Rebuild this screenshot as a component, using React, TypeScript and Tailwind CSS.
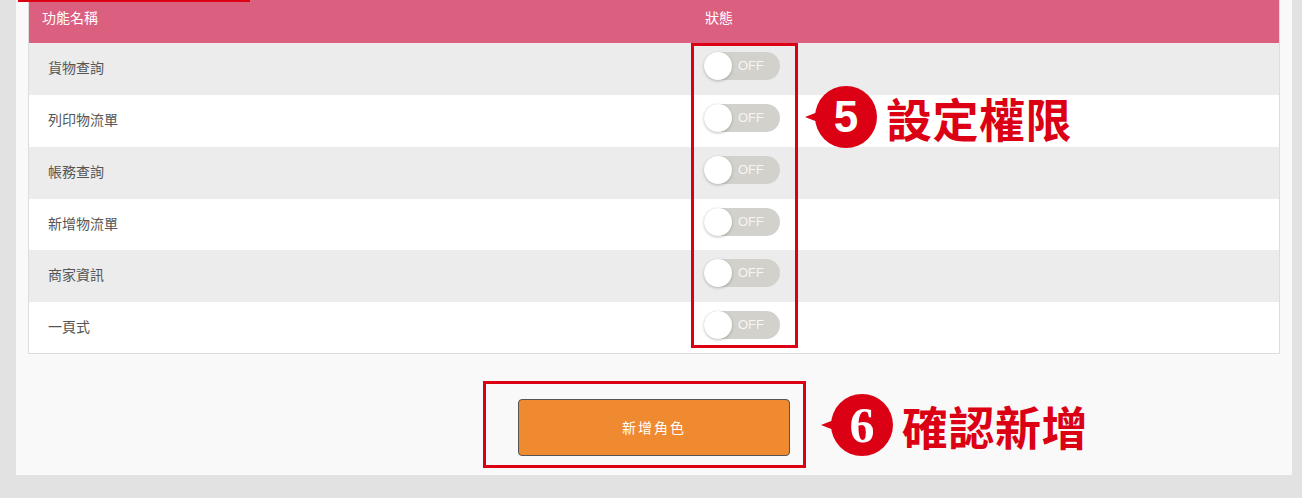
const rows = [
  { name: "貨物查詢", h: "h-[52px]" },
  { name: "列印物流單", h: "h-[52px]" },
  { name: "帳務查詢", h: "h-[52px]" },
  { name: "新增物流單", h: "h-[51px]" },
  { name: "商家資訊", h: "h-[52px]" },
  { name: "一頁式", h: "h-[51px]" },
];

function Toggle() {
  return (
    <div className="relative h-[28px] w-[76px] rounded-full bg-[#d3d1cb]">
      <div className="absolute left-0 top-0 h-[28px] w-[28px] rounded-full bg-white shadow-[0_1px_3px_rgba(0,0,0,0.25)]" />
      <span className="absolute left-[34px] top-[5px] font-['Liberation_Sans',sans-serif] text-[13px] leading-[18px] text-[#f7f6f2]">
        OFF
      </span>
    </div>
  );
}

function Callout({ num, label, serif }: { num: string; label: string; serif?: boolean }) {
  return (
    <div className="flex items-center">
      <div className="relative flex h-[62px] w-[62px] items-center justify-center rounded-full bg-[#dc0014]">
        <div className="absolute left-[-10px] top-[24px] h-0 w-0 border-y-[7px] border-r-[18px] border-y-transparent border-r-[#dc0014]" />
        <span
          className={
            serif
              ? "font-['Liberation_Serif',serif] text-[50px] font-bold leading-none text-white"
              : "font-['Liberation_Sans',sans-serif] text-[44px] font-bold leading-none text-white"
          }
        >
          {num}
        </span>
      </div>
      <span className="ml-[9px] font-['Noto_Sans_CJK_TC',sans-serif] text-[46px] font-bold leading-none tracking-[0.5px] text-[#dc0014]">
        {label}
      </span>
    </div>
  );
}

export default function App() {
  return (
    <div className="h-[498px] w-[1302px] overflow-hidden bg-[#e2e2e2] font-['Noto_Sans_CJK_TC',sans-serif]">
      <div className="relative ml-[16px] h-[475px] w-[1276px] bg-[#f9f9f9] px-[12px]">
        <div className="absolute left-[2px] top-0 h-[2px] w-[232px] bg-[#dc0014]" />

        <div className="border border-t-0 border-[#dddddd]">
          <div className="flex h-[43px] items-center bg-[#db5f7e] pb-[9px] text-[14px] text-white">
            <div className="w-[663px] pl-[13px]">功能名稱</div>
            <div className="pl-[13px]">狀態</div>
          </div>
          {rows.map((row, i) => (
            <div
              key={row.name}
              className={`flex items-center text-[14px] text-[#555555] ${row.h} ${
                i % 2 === 0 ? "bg-[#ececec]" : "bg-white"
              }`}
            >
              <div className="w-[663px] pb-[3px] pl-[19px]">{row.name}</div>
              <div className="pb-[6px] pl-[12px]">
                <Toggle />
              </div>
            </div>
          ))}
        </div>

        <div className="absolute left-[675px] top-[43px] h-[305px] w-[107px] border-[3px] border-[#dc0014]" />
        <div className="absolute left-[799px] top-[86px]">
          <Callout num="5" label="設定權限" />
        </div>

        <div className="mt-[45px] flex justify-center">
          <button className="h-[57px] w-[272px] rounded-[4px] border border-[#555555] bg-[#f08a30] text-[14px] tracking-[2px] text-white">
            新增角色
          </button>
        </div>
        <div className="absolute left-[467px] top-[381px] h-[87px] w-[323px] border-[3px] border-[#dc0014]" />
        <div className="absolute left-[815px] top-[394px]">
          <Callout num="6" label="確認新增" serif />
        </div>
      </div>
    </div>
  );
}
